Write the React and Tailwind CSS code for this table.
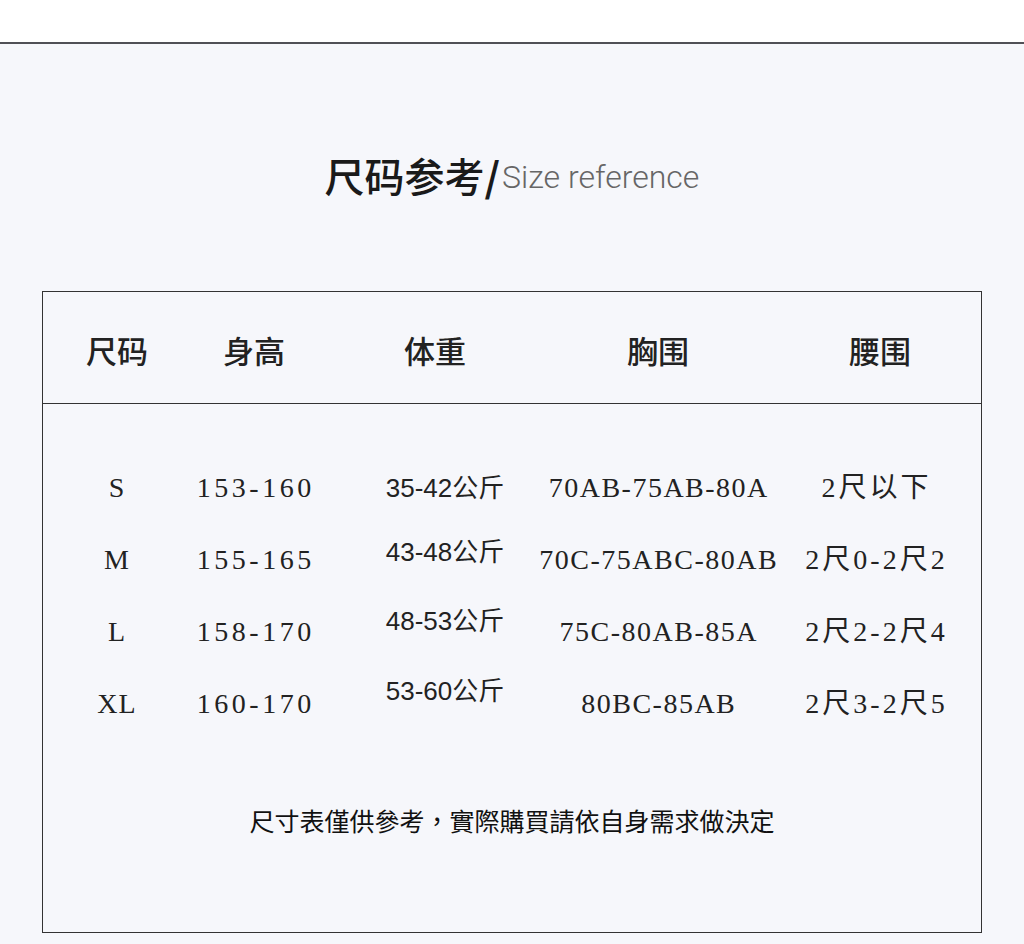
export default function App() {
  const rows = [
    { s: "S", h: "153-160", w: "35-42公斤", wpb: "pb-[0px]", b: "70AB-75AB-80A", wa: "2尺以下" },
    { s: "M", h: "155-165", w: "43-48公斤", wpb: "pb-[16px]", b: "70C-75ABC-80AB", wa: "2尺0-2尺2" },
    { s: "L", h: "158-170", w: "48-53公斤", wpb: "pb-[22px]", b: "75C-80AB-85A", wa: "2尺2-2尺4" },
    { s: "XL", h: "160-170", w: "53-60公斤", wpb: "pb-[26px]", b: "80BC-85AB", wa: "2尺3-2尺5" },
  ];
  const serif = { fontFamily: '"Liberation Serif", "Noto Sans CJK SC", serif' };
  return (
    <div className="h-[944px] w-[1024px] flex flex-col bg-[#f6f7fb] overflow-hidden">
      <div className="h-[42px] bg-white shrink-0" />
      <div className="h-[2px] bg-[#505056] shrink-0" />
      <div className="h-[247px] shrink-0 flex justify-center pt-[107px]">
        <div className="flex items-end leading-[48px] h-[48px]">
          <span className="text-[40px] font-medium text-[#1a1a1a] font-['Noto_Sans_CJK_SC',sans-serif]">尺码参考</span>
          <span className="text-[40px] font-bold text-[#1a1a1a] font-['Noto_Sans_CJK_SC',sans-serif] mr-[2px]">/</span>
          <span className="text-[32px] font-light text-[#666] font-['Roboto',sans-serif] leading-[44px]">Size reference</span>
        </div>
      </div>
      <div className="mx-[42px] h-[642px] border-[1.5px] border-[#333] flex flex-col">
        <div className="h-[112px] shrink-0 pt-[6px] border-b-[1.5px] border-[#333] flex items-center text-[31px] font-medium text-[#222] font-['Noto_Sans_CJK_SC',sans-serif]">
          <div className="w-[148px] text-center">尺码</div>
          <div className="w-[126px] text-center">身高</div>
          <div className="w-[220px] text-center pl-[16px]">体重</div>
          <div className="w-[242px] text-center">胸围</div>
          <div className="flex-1 text-center">腰围</div>
        </div>
        <div className="pt-[48px] flex flex-col">
          {rows.map((r) => (
            <div key={r.s} className="h-[72px] flex items-center text-[#222]">
              <div className="w-[148px] text-center text-[28px] tracking-[1px]" style={serif}>{r.s}</div>
              <div className="w-[126px] flex justify-center">
                <span className="text-[28px] tracking-[3.5px] mr-[-3.5px]" style={serif}>{r.h}</span>
              </div>
              <div className={`w-[220px] text-center pl-[36px] text-[26px] ${r.wpb} font-['Liberation_Sans','Noto_Sans_CJK_SC',sans-serif]`}>{r.w}</div>
              <div className="w-[242px] flex justify-center">
                <span className="text-[28px] tracking-[1.5px] mr-[-1.5px] whitespace-nowrap" style={serif}>{r.b}</span>
              </div>
              <div className="flex-1 flex justify-center pr-[10px]">
                <span className="text-[28px] tracking-[3px] mr-[-3px] whitespace-nowrap" style={serif}>{r.wa}</span>
              </div>
            </div>
          ))}
        </div>
        <div className="flex justify-center pt-[62px]">
          <div className="text-[25px] leading-[36px] text-[#111] font-['Noto_Sans_CJK_TC',sans-serif]">尺寸表僅供參考，實際購買請依自身需求做決定</div>
        </div>
      </div>
    </div>
  );
}
